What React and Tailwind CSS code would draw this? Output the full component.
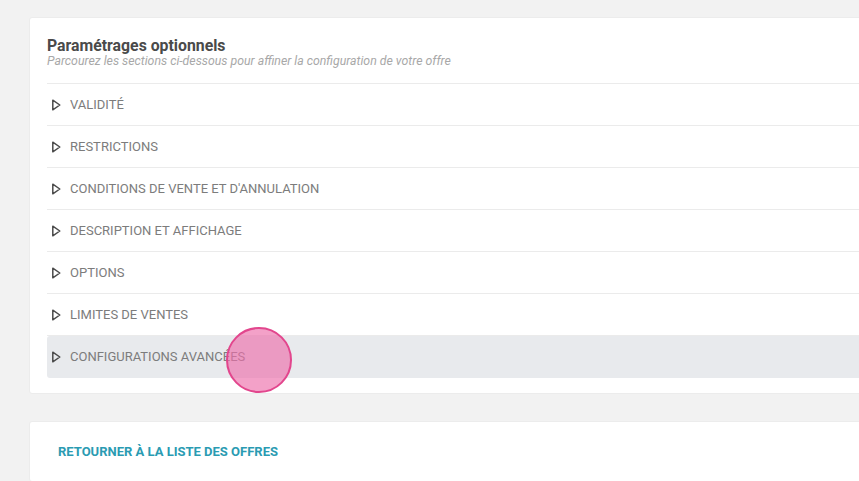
import React from "react";

const sections = [
  "Validité",
  "Restrictions",
  "Conditions de vente et d'annulation",
  "Description et affichage",
  "Options",
  "Limites de ventes",
  "Configurations avancées",
];

function Caret() {
  return (
    <svg width="10" height="12" viewBox="0 0 10 12" className="shrink-0">
      <path d="M1.8 1.2 L8.8 6 L1.8 10.8 Z" fill="none" stroke="#4b4b4b" strokeWidth="1.5" strokeLinejoin="round" />
    </svg>
  );
}

function Row({ label, active }) {
  return (
    <div
      className={`flex items-center gap-[9px] h-[42px] pl-[4px] ${
        active ? "bg-[#e8eaed] rounded-l-[3px]" : "border-b border-[#ebebeb]"
      }`}
    >
      <Caret />
      <span className="text-[13px] uppercase text-[#7c7c7c]">{label}</span>
    </div>
  );
}

export default function App() {
  return (
    <div
      className="relative w-[859px] h-[481px] overflow-hidden bg-[#f2f2f2] pl-[29px] pt-[17px]"
      style={{ fontFamily: "Roboto, 'Liberation Sans', sans-serif" }}
    >
      <div className="w-[880px] bg-white border border-[#ececec] rounded-[3px] pl-[17px] pt-[19px] pb-[15px]">
        <div className="pb-[15px] border-b border-[#ebebeb]">
          <h2 className="text-[15.8px] leading-[17px] font-bold text-[#4a4a4a]">Paramétrages optionnels</h2>
          <p className="text-[12.3px] leading-[14px] italic text-[#a8a8a8]">
            Parcourez les sections ci-dessous pour affiner la configuration de votre offre
          </p>
        </div>
        {sections.map((s, i) => (
          <Row key={s} label={s} active={i === sections.length - 1} />
        ))}
      </div>

      <div className="mt-[27px] w-[880px] h-[61px] bg-white border border-[#ececec] rounded-[3px] pl-[28px] flex items-center">
        <a className="text-[13px] font-bold uppercase text-[#2a9bb2]">Retourner à la liste des offres</a>
      </div>

      <div className="absolute left-[226px] top-[327px] w-[66px] h-[66px] rounded-full border-2 border-[#e2468d] bg-[rgba(236,110,170,0.65)]" />
    </div>
  );
}
